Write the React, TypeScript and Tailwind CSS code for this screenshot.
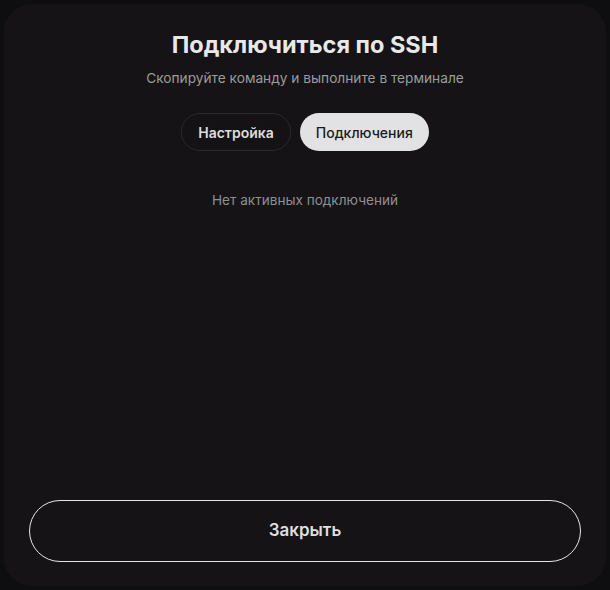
export default function App() {
  return (
    <div
      className="flex h-[590px] w-[610px] bg-[#0e0d0f] p-[4px] text-[#e6e6e6]"
      style={{ fontFamily: "Inter, 'Noto Sans', sans-serif" }}
    >
      <div className="flex flex-1 flex-col items-center rounded-[28px] bg-[#151316] px-[25px] pb-[24px] pt-[26px]">
        <h2 className="text-[23.5px] font-bold leading-[30px] text-[#e8e8e8]">Подключиться по SSH</h2>
        <p className="mt-[8px] text-[13.7px] leading-[20px] text-[#9b9b9b]">
          Скопируйте команду и выполните в терминале
        </p>

        <div className="mt-[25px] flex gap-[9px]">
          <button
            type="button"
            className="h-[38px] rounded-full border border-[#2a282c] bg-[#141215] px-[16px] text-[14px] font-semibold text-[#dcdcdc]"
          >
            Настройка
          </button>
          <button
            type="button"
            className="h-[38px] rounded-full bg-[#e2e2e4] px-[16px] text-[14px] font-medium text-[#1a1a1a]"
          >
            Подключения
          </button>
        </div>

        <p className="mt-[39px] text-[13.6px] leading-[20px] text-[#8f8f8f]">Нет активных подключений</p>

        <div className="flex-1" />

        <button
          type="button"
          className="h-[62px] w-full rounded-full border border-[#e6e6e6] text-[17px] font-semibold text-[#dedede]"
        >
          Закрыть
        </button>
      </div>
    </div>
  );
}
